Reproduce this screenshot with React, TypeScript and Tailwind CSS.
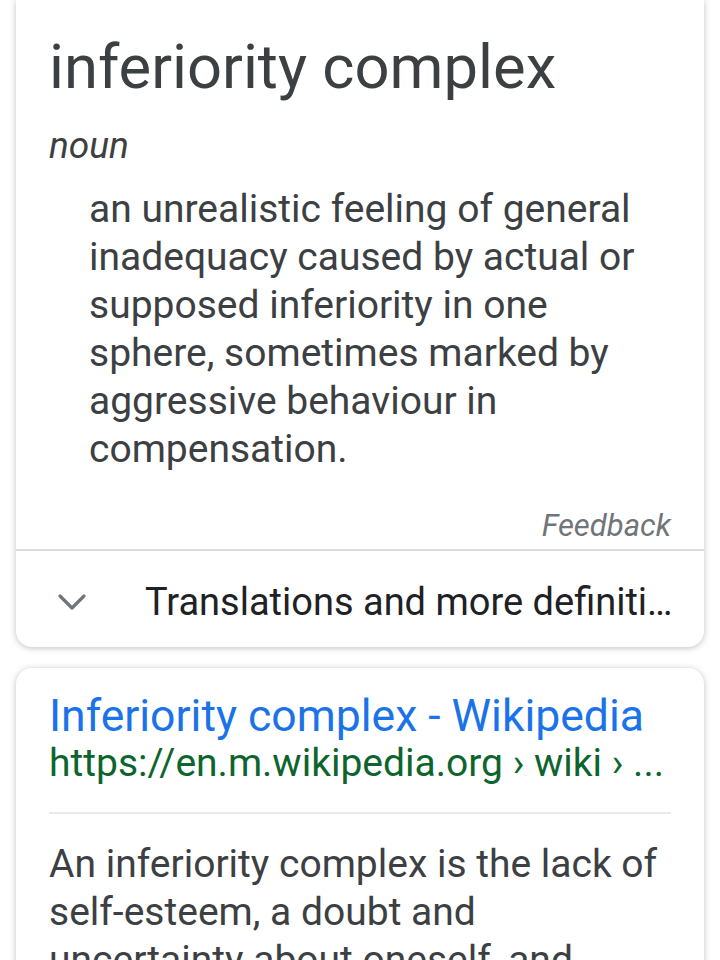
import { ChevronDown } from "lucide-react";

const font = { fontFamily: "Roboto, 'Noto Sans', sans-serif" };

const definition = [
  "an unrealistic feeling of general",
  "inadequacy caused by actual or",
  "supposed inferiority in one",
  "sphere, sometimes marked by",
  "aggressive behaviour in",
  "compensation.",
];

const snippet = [
  "An inferiority complex is the lack of",
  "self-esteem, a doubt and",
  "uncertainty about oneself, and",
  "feelings of not measuring up to",
];

export default function App() {
  return (
    <div className="min-h-[960px] w-[720px] overflow-hidden bg-white" style={font}>
      <div className="mx-4 rounded-b-2xl bg-white shadow-[0_1px_6px_rgba(32,33,36,0.28)]">
        <div className="px-[33px] pt-[35px]">
          <h1 className="whitespace-nowrap text-[61.5px] leading-[64px] text-[#3c4043]">inferiority complex</h1>
          <div className="mt-[27px] text-[37px] leading-[40px] italic text-[#3c4043]">noun</div>
          <div className="mt-[19px] pl-10 text-[39px] leading-[48px] text-[#3c4043]">
            {definition.map((line) => (
              <div key={line} className="whitespace-nowrap">
                {line}
              </div>
            ))}
          </div>
          <div className="mt-[35px] text-right text-[31px] leading-[36px] italic text-[#70757a]">
            Feedback
          </div>
        </div>
        <div className="mt-[5px] border-t-2 border-[#dadce0]" />
        <div className="flex items-center pt-[27px] pb-[21px] pl-8 pr-[28px]">
          <ChevronDown size={48} strokeWidth={1.6} className="shrink-0 text-[#70757a]" />
          <div className="ml-[49px] min-w-0 truncate text-[38px] leading-[48px] text-[#202124]">
            Translations and more definitions
          </div>
        </div>
      </div>

      <div className="mx-4 mt-[21px] rounded-2xl bg-white px-[33px] pt-[26px] pb-8 shadow-[0_1px_6px_rgba(32,33,36,0.28)]">
        <div className="whitespace-nowrap text-[44.5px] leading-[44px] text-[#1a73e8]">
          Inferiority complex - Wikipedia
        </div>
        <div className="mt-[3px] truncate text-[39px] leading-[44px] text-[#0d652d]">
          https://en.m.wikipedia.org › wiki › ...
        </div>
        <div className="mt-[27px] border-t-2 border-[#e8eaed]" />
        <div className="mt-[26px] text-[39px] leading-[48px] text-[#3c4043]">
          {snippet.map((line) => (
            <div key={line} className="whitespace-nowrap">
              {line}
            </div>
          ))}
        </div>
      </div>
    </div>
  );
}
